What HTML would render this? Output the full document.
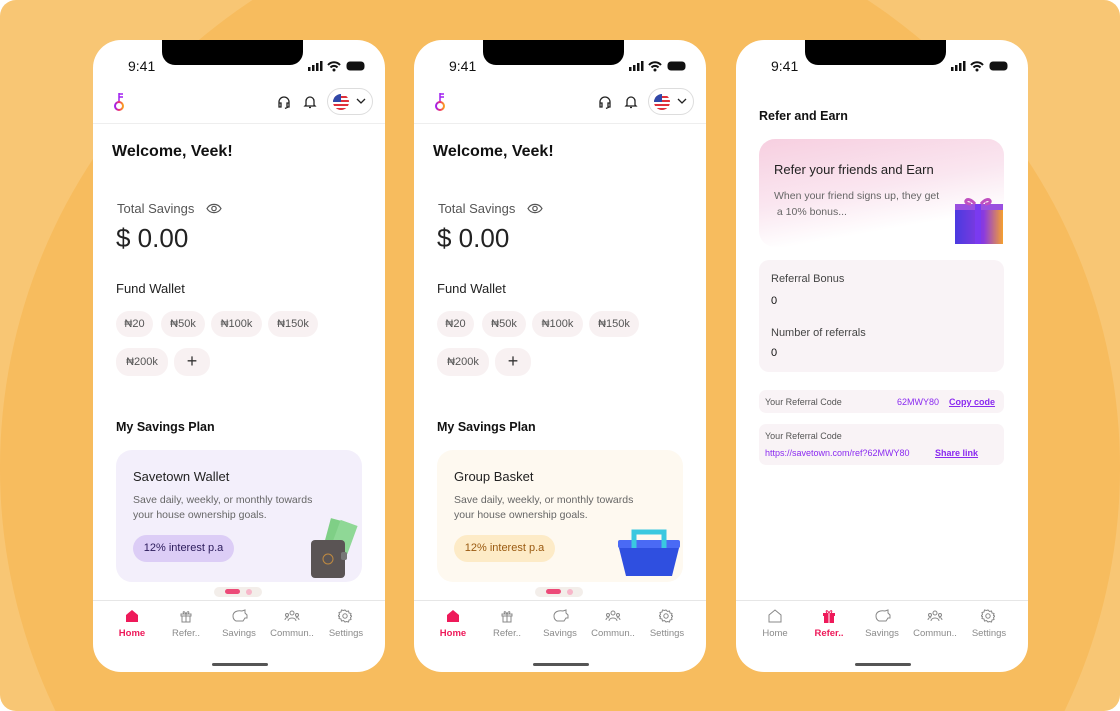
<!DOCTYPE html>
<html><head><meta charset="utf-8"><style>
*{margin:0;padding:0;box-sizing:border-box}
html,body{width:1120px;height:711px;overflow:hidden}
body{background:#fff;font-family:"Liberation Sans",sans-serif;position:relative}
.bg{position:absolute;left:0;top:0;width:1120px;height:711px;border-radius:16px;overflow:hidden;background:#f8c674}
.c{position:absolute;border-radius:50%}
.ph{position:absolute;top:40px;width:292px;height:632px;background:#fff;border-radius:28px;overflow:hidden}
.a{position:absolute;white-space:nowrap}
.notch{left:69px;top:0;width:141px;height:25px;background:#000;border-radius:0 0 13px 13px}
.time{left:35px;top:18px;font-size:14px;color:#111}
.hdr{left:0;top:83px;width:292px;height:1px;background:#eee}
.chip{position:absolute;height:26px;border-radius:13px;background:#f8f1f2;font-size:11px;color:#555;text-align:center;line-height:26px}
.nav{left:0;top:560px;width:292px;height:1px;background:#e6e6e6}
.nl{position:absolute;top:588px;font-size:9.5px;color:#8a8a8a;text-align:center;width:56px}
.bar{left:119px;top:623px;width:56px;height:3px;border-radius:2px;background:#555}
</style></head><body>
<div class="bg">
<div class="c" style="left:0;top:-92px;width:1120px;height:1120px;background:#f7bc5e"></div>
</div>

<div class="ph" style="left:93px">
<div class="a notch"></div><div class="a time">9:41</div>
<svg class="a" style="left:214px;top:20px" width="60" height="12"><rect x="1" y="7" width="2.5" height="4" fill="#111"/><rect x="5" y="5" width="2.5" height="6" fill="#111"/><rect x="9" y="3" width="2.5" height="8" fill="#111"/><rect x="13" y="1" width="2.5" height="10" fill="#111"/><path d="M21 5a8 8 0 0 1 12 0M23.5 7.5a4.5 4.5 0 0 1 7 0" stroke="#111" stroke-width="2" fill="none"/><circle cx="27" cy="10" r="1.5" fill="#111"/><rect x="40" y="2" width="17" height="8" rx="3" stroke="#111" fill="#111"/></svg>
<svg class="a" style="left:20px;top:52px" width="14" height="20"><defs><linearGradient id="g1"><stop offset="0" stop-color="#a020f0"/><stop offset="0.5" stop-color="#f0306a"/><stop offset="1" stop-color="#f9a020"/></linearGradient><clipPath id="fc"><circle cx="8" cy="8" r="8"/></clipPath></defs><path d="M6 1v9M6 2h4M6 5h4" stroke="#a020f0" stroke-width="1.5" fill="none"/><circle cx="6" cy="14" r="4" stroke="url(#g1)" stroke-width="2" fill="none"/></svg>
<svg class="a" style="left:184px;top:55px" width="14" height="14"><path d="M2 9V7a5 5 0 0 1 10 0v2M2 8h2v4H2zM10 8h2v4h-2zM11 12l-3 1.5" stroke="#222" stroke-width="1.3" fill="none"/></svg>
<svg class="a" style="left:210px;top:54px" width="14" height="15"><path d="M3 11V7a4 4 0 0 1 8 0v4l1 1H2zM6 13.5h2" stroke="#222" stroke-width="1.3" fill="none"/></svg>
<div class="a" style="left:234px;top:48px;width:46px;height:27px;border:1px solid #ddd;border-radius:14px"></div>
<svg class="a" style="left:240px;top:54px" width="16" height="16"><g clip-path="url(#fc)"><rect width="16" height="16" fill="#fff"/><rect y="2" width="16" height="2" fill="#e0303a"/><rect y="6" width="16" height="2" fill="#e0303a"/><rect y="10" width="16" height="2" fill="#e0303a"/><rect y="14" width="16" height="2" fill="#e0303a"/><rect width="8" height="8" fill="#3048a8"/></g></svg>
<svg class="a" style="left:263px;top:57px" width="10" height="8"><path d="M1 2l4 4 4-4" stroke="#222" stroke-width="1.3" fill="none"/></svg>
<div class="a hdr"></div>
<div class="a" style="left:19px;top:103px;font-size:16px;font-weight:bold;color:#111">Welcome, Veek!</div>
<div class="a" style="left:24px;top:161px;font-size:13px;color:#555">Total Savings</div>
<svg class="a" style="left:113px;top:163px" width="16" height="11"><path d="M1 5.5C4 0 12 0 15 5.5 12 11 4 11 1 5.5z" stroke="#555" stroke-width="1.2" fill="none"/><circle cx="8" cy="5.5" r="2.2" stroke="#555" stroke-width="1.2" fill="none"/></svg>
<div class="a" style="left:23px;top:183px;font-size:26px;color:#222">$ 0.00</div>
<div class="a" style="left:23px;top:241px;font-size:13px;color:#222">Fund Wallet</div>
<div class="chip" style="left:23px;top:271px;width:37px">₦20</div>
<div class="chip" style="left:68px;top:271px;width:44px">₦50k</div>
<div class="chip" style="left:118px;top:271px;width:51px">₦100k</div>
<div class="chip" style="left:175px;top:271px;width:50px">₦150k</div>
<div class="chip" style="left:23px;top:308px;width:52px;height:28px;line-height:28px">₦200k</div>
<div class="chip" style="left:81px;top:308px;width:36px;height:28px;line-height:26px;font-size:18px;color:#333">+</div>
<div class="a" style="left:23px;top:380px;font-size:12.5px;font-weight:bold;color:#111">My Savings Plan</div>
<div class="a" style="left:23px;top:410px;width:246px;height:132px;border-radius:16px;background:#f3effb"></div>
<div class="a" style="left:40px;top:429px;font-size:13px;color:#222">Savetown Wallet</div>
<div class="a" style="left:40px;top:453px;font-size:10.5px;line-height:15px;color:#666">Save daily, weekly, or monthly towards<br>your house ownership goals.</div>
<div class="a" style="left:40px;top:495px;width:101px;height:27px;border-radius:14px;background:#dccdf6;font-size:11px;line-height:27px;text-align:center;color:#2a1a5a">12% interest p.a</div>
<svg class="a" style="left:214px;top:478px" width="54" height="64"><rect x="20" y="2" width="18" height="28" transform="rotate(15 29 16)" fill="#7fcf86"/><rect x="28" y="4" width="18" height="30" transform="rotate(20 37 19)" fill="#8fd896"/><rect x="4" y="22" width="34" height="38" rx="4" fill="#5a5454"/><circle cx="21" cy="41" r="5" stroke="#c08a40" fill="none"/><rect x="34" y="34" width="6" height="8" rx="2" fill="#777"/></svg>
<div class="a" style="left:121px;top:547px;width:48px;height:10px;border-radius:5px;background:#f3eeea"></div>
<div class="a" style="left:132px;top:549px;width:15px;height:5px;border-radius:3px;background:#ec4a78"></div>
<div class="a" style="left:153px;top:549px;width:6px;height:6px;border-radius:3px;background:#f7b6c9"></div>
<div class="a nav"></div>
<svg class="a" style="left:32px;top:569px" width="14" height="14"><path d="M1 6l6-5 6 5v7H1z" fill="#ee1a5a"/></svg>
<svg class="a" style="left:86px;top:569px" width="14" height="14"><path d="M2 5h10v2H2zM3 7h8v6H3zM7 5v8M7 5C5 1 3 3 5 5M7 5c2-4 4-2 2 0" stroke="#888" fill="none"/></svg>
<svg class="a" style="left:138px;top:569px" width="18" height="14"><path d="M2 7c0-4 4-6 9-5l3-1v3l2 2v3h-2l-2 3H5C3 11 2 9 2 7z" stroke="#888" fill="none"/></svg>
<svg class="a" style="left:191px;top:569px" width="16" height="14"><circle cx="8" cy="4" r="2" stroke="#888" fill="none"/><circle cx="3" cy="6" r="1.5" stroke="#888" fill="none"/><circle cx="13" cy="6" r="1.5" stroke="#888" fill="none"/><path d="M4 12c0-4 8-4 8 0M1 11c0-2 2-3 3-2M15 11c0-2-2-3-3-2" stroke="#888" fill="none"/></svg>
<svg class="a" style="left:245px;top:569px" width="14" height="14"><circle cx="7" cy="7" r="2.2" stroke="#888" fill="none"/><path d="M7 1l1.5 1.5 2-.5.5 2 2 .5-.5 2L14 7l-1.5 1.5.5 2-2 .5-.5 2-2-.5L7 13l-1.5-1.5-2 .5-.5-2-2-.5.5-2L0 7l1.5-1.5-.5-2 2-.5.5-2 2 .5z" stroke="#888" fill="none"/></svg>
<div class="nl" style="left:11px;color:#ee1a5a;font-weight:bold">Home</div>
<div class="nl" style="left:65px">Refer..</div>
<div class="nl" style="left:118px">Savings</div>
<div class="nl" style="left:171px">Commun..</div>
<div class="nl" style="left:225px">Settings</div>
<div class="a bar"></div>
</div>

<div class="ph" style="left:414px">
<div class="a notch"></div><div class="a time">9:41</div>
<svg class="a" style="left:214px;top:20px" width="60" height="12"><rect x="1" y="7" width="2.5" height="4" fill="#111"/><rect x="5" y="5" width="2.5" height="6" fill="#111"/><rect x="9" y="3" width="2.5" height="8" fill="#111"/><rect x="13" y="1" width="2.5" height="10" fill="#111"/><path d="M21 5a8 8 0 0 1 12 0M23.5 7.5a4.5 4.5 0 0 1 7 0" stroke="#111" stroke-width="2" fill="none"/><circle cx="27" cy="10" r="1.5" fill="#111"/><rect x="40" y="2" width="17" height="8" rx="3" stroke="#111" fill="#111"/></svg>
<svg class="a" style="left:20px;top:52px" width="14" height="20"><path d="M6 1v9M6 2h4M6 5h4" stroke="#a020f0" stroke-width="1.5" fill="none"/><circle cx="6" cy="14" r="4" stroke="url(#g1)" stroke-width="2" fill="none"/></svg>
<svg class="a" style="left:184px;top:55px" width="14" height="14"><path d="M2 9V7a5 5 0 0 1 10 0v2M2 8h2v4H2zM10 8h2v4h-2zM11 12l-3 1.5" stroke="#222" stroke-width="1.3" fill="none"/></svg>
<svg class="a" style="left:210px;top:54px" width="14" height="15"><path d="M3 11V7a4 4 0 0 1 8 0v4l1 1H2zM6 13.5h2" stroke="#222" stroke-width="1.3" fill="none"/></svg>
<div class="a" style="left:234px;top:48px;width:46px;height:27px;border:1px solid #ddd;border-radius:14px"></div>
<svg class="a" style="left:240px;top:54px" width="16" height="16"><g clip-path="url(#fc)"><rect width="16" height="16" fill="#fff"/><rect y="2" width="16" height="2" fill="#e0303a"/><rect y="6" width="16" height="2" fill="#e0303a"/><rect y="10" width="16" height="2" fill="#e0303a"/><rect y="14" width="16" height="2" fill="#e0303a"/><rect width="8" height="8" fill="#3048a8"/></g></svg>
<svg class="a" style="left:263px;top:57px" width="10" height="8"><path d="M1 2l4 4 4-4" stroke="#222" stroke-width="1.3" fill="none"/></svg>
<div class="a hdr"></div>
<div class="a" style="left:19px;top:103px;font-size:16px;font-weight:bold;color:#111">Welcome, Veek!</div>
<div class="a" style="left:24px;top:161px;font-size:13px;color:#555">Total Savings</div>
<svg class="a" style="left:113px;top:163px" width="16" height="11"><path d="M1 5.5C4 0 12 0 15 5.5 12 11 4 11 1 5.5z" stroke="#555" stroke-width="1.2" fill="none"/><circle cx="8" cy="5.5" r="2.2" stroke="#555" stroke-width="1.2" fill="none"/></svg>
<div class="a" style="left:23px;top:183px;font-size:26px;color:#222">$ 0.00</div>
<div class="a" style="left:23px;top:241px;font-size:13px;color:#222">Fund Wallet</div>
<div class="chip" style="left:23px;top:271px;width:37px">₦20</div>
<div class="chip" style="left:68px;top:271px;width:44px">₦50k</div>
<div class="chip" style="left:118px;top:271px;width:51px">₦100k</div>
<div class="chip" style="left:175px;top:271px;width:50px">₦150k</div>
<div class="chip" style="left:23px;top:308px;width:52px;height:28px;line-height:28px">₦200k</div>
<div class="chip" style="left:81px;top:308px;width:36px;height:28px;line-height:26px;font-size:18px;color:#333">+</div>
<div class="a" style="left:23px;top:380px;font-size:12.5px;font-weight:bold;color:#111">My Savings Plan</div>
<div class="a" style="left:23px;top:410px;width:246px;height:132px;border-radius:16px;background:#fef9f0"></div>
<div class="a" style="left:40px;top:429px;font-size:13px;color:#222">Group Basket</div>
<div class="a" style="left:40px;top:453px;font-size:10.5px;line-height:15px;color:#666">Save daily, weekly, or monthly towards<br>your house ownership goals.</div>
<div class="a" style="left:40px;top:495px;width:101px;height:27px;border-radius:14px;background:#fdebc7;font-size:11px;line-height:27px;text-align:center;color:#9a5a10">12% interest p.a</div>
<svg class="a" style="left:202px;top:484px" width="66" height="56"><path d="M2 20h62l-8 32H10z" fill="#2f4fe0"/><rect x="2" y="16" width="62" height="8" rx="2" fill="#4a6af5"/><path d="M18 24V8h30v16" stroke="#3ac8e0" stroke-width="5" fill="none"/></svg>
<div class="a" style="left:121px;top:547px;width:48px;height:10px;border-radius:5px;background:#f3eeea"></div>
<div class="a" style="left:132px;top:549px;width:15px;height:5px;border-radius:3px;background:#ec4a78"></div>
<div class="a" style="left:153px;top:549px;width:6px;height:6px;border-radius:3px;background:#f7b6c9"></div>
<div class="a nav"></div>
<svg class="a" style="left:32px;top:569px" width="14" height="14"><path d="M1 6l6-5 6 5v7H1z" fill="#ee1a5a"/></svg>
<svg class="a" style="left:86px;top:569px" width="14" height="14"><path d="M2 5h10v2H2zM3 7h8v6H3zM7 5v8M7 5C5 1 3 3 5 5M7 5c2-4 4-2 2 0" stroke="#888" fill="none"/></svg>
<svg class="a" style="left:138px;top:569px" width="18" height="14"><path d="M2 7c0-4 4-6 9-5l3-1v3l2 2v3h-2l-2 3H5C3 11 2 9 2 7z" stroke="#888" fill="none"/></svg>
<svg class="a" style="left:191px;top:569px" width="16" height="14"><circle cx="8" cy="4" r="2" stroke="#888" fill="none"/><circle cx="3" cy="6" r="1.5" stroke="#888" fill="none"/><circle cx="13" cy="6" r="1.5" stroke="#888" fill="none"/><path d="M4 12c0-4 8-4 8 0M1 11c0-2 2-3 3-2M15 11c0-2-2-3-3-2" stroke="#888" fill="none"/></svg>
<svg class="a" style="left:245px;top:569px" width="14" height="14"><circle cx="7" cy="7" r="2.2" stroke="#888" fill="none"/><path d="M7 1l1.5 1.5 2-.5.5 2 2 .5-.5 2L14 7l-1.5 1.5.5 2-2 .5-.5 2-2-.5L7 13l-1.5-1.5-2 .5-.5-2-2-.5.5-2L0 7l1.5-1.5-.5-2 2-.5.5-2 2 .5z" stroke="#888" fill="none"/></svg>
<div class="nl" style="left:11px;color:#ee1a5a;font-weight:bold">Home</div>
<div class="nl" style="left:65px">Refer..</div>
<div class="nl" style="left:118px">Savings</div>
<div class="nl" style="left:171px">Commun..</div>
<div class="nl" style="left:225px">Settings</div>
<div class="a bar"></div>
</div>

<div class="ph" style="left:736px">
<div class="a notch"></div><div class="a time">9:41</div>
<svg class="a" style="left:214px;top:20px" width="60" height="12"><rect x="1" y="7" width="2.5" height="4" fill="#111"/><rect x="5" y="5" width="2.5" height="6" fill="#111"/><rect x="9" y="3" width="2.5" height="8" fill="#111"/><rect x="13" y="1" width="2.5" height="10" fill="#111"/><path d="M21 5a8 8 0 0 1 12 0M23.5 7.5a4.5 4.5 0 0 1 7 0" stroke="#111" stroke-width="2" fill="none"/><circle cx="27" cy="10" r="1.5" fill="#111"/><rect x="40" y="2" width="17" height="8" rx="3" stroke="#111" fill="#111"/></svg>
<div class="a" style="left:23px;top:69px;font-size:12.5px;font-weight:bold;color:#111">Refer and Earn</div>
<div class="a" style="left:23px;top:99px;width:245px;height:108px;border-radius:16px;background:linear-gradient(170deg,#f7cfe0 0%,#fae6f0 45%,#ffffff 75%)"></div>
<div class="a" style="left:38px;top:122px;font-size:13px;color:#222">Refer your friends and Earn</div>
<div class="a" style="left:38px;top:148px;font-size:10.5px;line-height:16px;color:#666">When your friend signs up, they get<br>&nbsp;a 10% bonus...</div>
<svg class="a" style="left:217px;top:154px" width="52" height="54"><defs><linearGradient id="gg"><stop offset="0" stop-color="#4a3ae0"/><stop offset="0.6" stop-color="#8a3ae0"/><stop offset="1" stop-color="#f5a030"/></linearGradient></defs><path d="M2 10h48v40H2z" fill="url(#gg)"/><rect x="2" y="10" width="48" height="6" fill="#9a50e0"/><path d="M22 10c-8-10-14 0-4 0M28 10c8-10 14 0 4 0" stroke="#c050c0" stroke-width="3" fill="none"/><rect x="22" y="10" width="6" height="40" fill="#7a3af0"/></svg>
<div class="a" style="left:23px;top:220px;width:245px;height:112px;border-radius:10px;background:#f9f3f6"></div>
<div class="a" style="left:35px;top:233px;font-size:11px;color:#444">Referral Bonus</div>
<div class="a" style="left:35px;top:255px;font-size:11px;color:#111">0</div>
<div class="a" style="left:35px;top:287px;font-size:11px;color:#444">Number of referrals</div>
<div class="a" style="left:35px;top:307px;font-size:11px;color:#111">0</div>
<div class="a" style="left:23px;top:350px;width:245px;height:23px;border-radius:7px;background:#f9f3f6"></div>
<div class="a" style="left:29px;top:357px;font-size:9px;color:#555">Your Referral Code</div>
<div class="a" style="left:161px;top:357px;font-size:9px;color:#8a2af0">62MWY80</div>
<div class="a" style="left:213px;top:357px;font-size:9px;color:#8a2af0;font-weight:bold;text-decoration:underline">Copy code</div>
<div class="a" style="left:23px;top:384px;width:245px;height:41px;border-radius:7px;background:#f9f3f6"></div>
<div class="a" style="left:29px;top:391px;font-size:9px;color:#555">Your Referral Code</div>
<div class="a" style="left:29px;top:408px;font-size:9px;color:#8a2af0">https://savetown.com/ref?62MWY80</div>
<div class="a" style="left:199px;top:408px;font-size:9px;color:#8a2af0;font-weight:bold;text-decoration:underline">Share link</div>
<div class="a nav"></div>
<svg class="a" style="left:32px;top:569px" width="14" height="14"><path d="M1 6l6-5 6 5v7H1z" stroke="#888" fill="none"/></svg>
<svg class="a" style="left:86px;top:569px" width="14" height="14"><path d="M1 4h12v3H1zM2 7h10v7H2z" fill="#ee1a5a"/><path d="M7 4v10" stroke="#fff"/><path d="M7 4C5 0 3 2 5 4M7 4c2-4 4-2 2 0" stroke="#ee1a5a" fill="none"/></svg>
<svg class="a" style="left:138px;top:569px" width="18" height="14"><path d="M2 7c0-4 4-6 9-5l3-1v3l2 2v3h-2l-2 3H5C3 11 2 9 2 7z" stroke="#888" fill="none"/></svg>
<svg class="a" style="left:191px;top:569px" width="16" height="14"><circle cx="8" cy="4" r="2" stroke="#888" fill="none"/><circle cx="3" cy="6" r="1.5" stroke="#888" fill="none"/><circle cx="13" cy="6" r="1.5" stroke="#888" fill="none"/><path d="M4 12c0-4 8-4 8 0M1 11c0-2 2-3 3-2M15 11c0-2-2-3-3-2" stroke="#888" fill="none"/></svg>
<svg class="a" style="left:245px;top:569px" width="14" height="14"><circle cx="7" cy="7" r="2.2" stroke="#888" fill="none"/><path d="M7 1l1.5 1.5 2-.5.5 2 2 .5-.5 2L14 7l-1.5 1.5.5 2-2 .5-.5 2-2-.5L7 13l-1.5-1.5-2 .5-.5-2-2-.5.5-2L0 7l1.5-1.5-.5-2 2-.5.5-2 2 .5z" stroke="#888" fill="none"/></svg>
<div class="nl" style="left:11px">Home</div>
<div class="nl" style="left:65px;color:#ee1a5a;font-weight:bold">Refer..</div>
<div class="nl" style="left:118px">Savings</div>
<div class="nl" style="left:171px">Commun..</div>
<div class="nl" style="left:225px">Settings</div>
<div class="a bar"></div>
</div>
</body></html>
